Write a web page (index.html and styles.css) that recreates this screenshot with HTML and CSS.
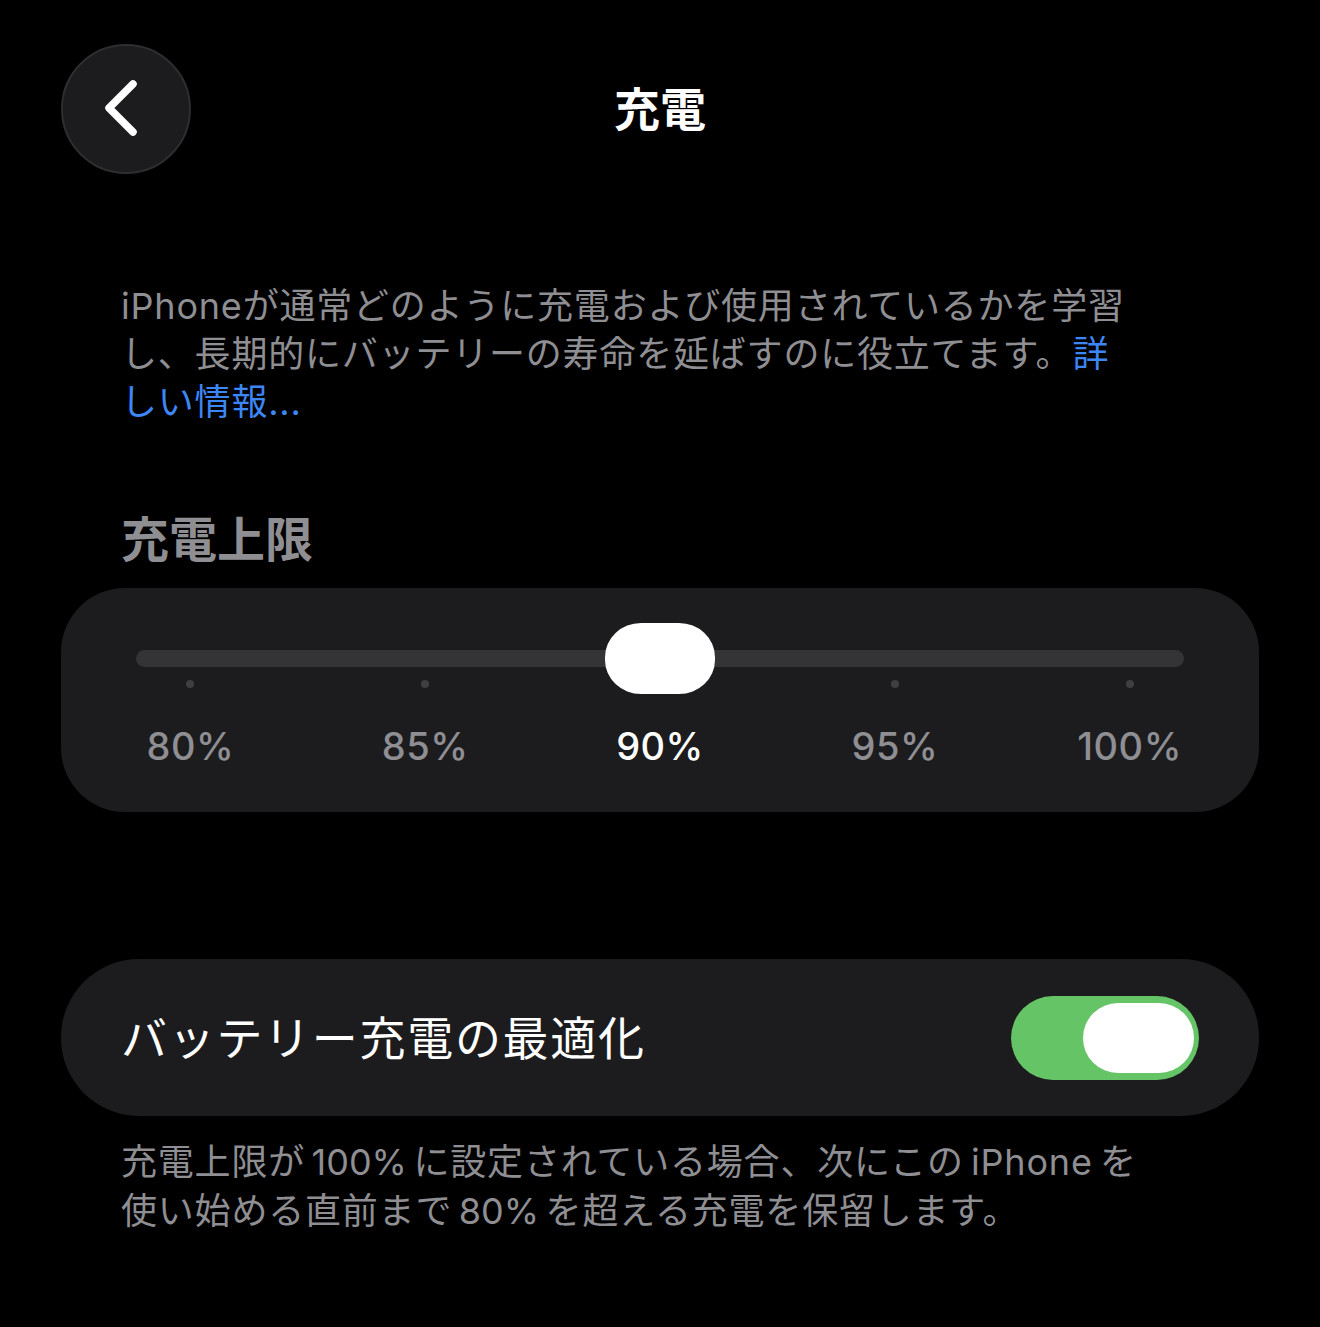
FILE: index.html
```html
<!DOCTYPE html>
<html lang="ja">
<head>
  <meta charset="UTF-8" />
  <meta name="viewport" content="width=device-width, initial-scale=1.0" />
  <title>充電</title>
  <link rel="stylesheet" href="styles.css">
</head>
<body>
  <div class="container">
    <header class="nav">
      <button class="back" aria-label="戻る">
        <svg width="40" height="60" viewBox="0 0 40 60">
          <polyline points="30,5 6,29 30,53" fill="none" stroke="#fff" stroke-width="7.5" stroke-linecap="round" stroke-linejoin="round" />
        </svg>
      </button>
      <h1>充電</h1>
      <span></span>
    </header>

    <p class="intro">iPhoneが通常どのように充電および使用されているかを学習し、長期的にバッテリーの寿命を延ばすのに役立てます。<a href="#">詳しい情報...</a></p>

    <h2 class="section-title">充電上限</h2>
    <section class="card limit">
      <div class="track">
        <div class="thumb"></div>
      </div>
      <!-- Stops along the slider -->
      <div class="stops">
        <div class="stop"><span class="dot"></span><span class="label">80%</span></div>
        <div class="stop"><span class="dot"></span><span class="label">85%</span></div>
        <div class="stop active"><span class="dot"></span><span class="label">90%</span></div>
        <div class="stop"><span class="dot"></span><span class="label">95%</span></div>
        <div class="stop"><span class="dot"></span><span class="label">100%</span></div>
      </div>
    </section>

    <section class="card row">
      <span class="row-title">バッテリー充電の最適化</span>
      <div class="switch on"><span class="knob"></span></div>
    </section>
    <!-- narrow no-break spaces keep latin runs apart from kana -->
    <p class="note">充電上限が&#8239;100%&#8239;に設定されている場合、次にこの&#8239;iPhone&#8239;を使い始める直前まで&#8239;80%&#8239;を超える充電を保留します。</p>
  </div>
</body>
</html>
```

FILE: styles.css
```css
* {
  margin: 0;
  padding: 0;
  box-sizing: border-box;
}
body {
  background-color: #000;
  color: #fff;
  font-family: Inter, "Noto Sans CJK JP", sans-serif;
}
.container {
  padding: 44px 61px 0;
}

/* Navigation bar */
.nav {
  display: grid;
  grid-template-columns: 130px 1fr 130px;
  align-items: center;
  height: 130px;
}
.back {
  width: 130px;
  height: 130px;
  border-radius: 50%;
  background-color: #1c1c1e;
  border: 2px solid #2e2e30;
  display: flex;
  align-items: center;
  justify-content: center;
  padding-right: 6px;
  cursor: pointer;
}
.nav h1 {
  text-align: center;
  font-size: 46px;
  font-weight: 700;
  line-height: 1;
}

/* Intro text */
.intro {
  margin: 108px 0 0 60px;
  width: 1010px;
  font-size: 36px;
  line-height: 48px;
  letter-spacing: 0.8px;
  color: #8e8e93;
}
.intro a {
  color: #3d86f5;
  text-decoration: none;
}

.section-title {
  margin: 86px 0 0 60px;
  font-size: 48px;
  font-weight: 700;
  line-height: 56px;
  color: #8e8e93;
}

/* Cards */
.card {
  background-color: #1c1c1e;
  border-radius: 64px;
}
.limit {
  margin-top: 20px;
  height: 224px;
  padding: 62px 12px 0;
}
.track {
  position: relative;
  height: 17px;
  margin: 0 63px;
  border-radius: 9px;
  background-color: #343437;
}
.thumb {
  position: absolute;
  left: 50%;
  top: 50%;
  width: 110px;
  height: 71px;
  margin: -35.5px 0 0 -55px;
  border-radius: 36px / 34px;
  background-color: #fff;
}
.stops {
  display: grid;
  grid-template-columns: repeat(5, 1fr);
  margin-top: 13px;
}
.stop {
  display: flex;
  flex-direction: column;
  align-items: center;
}
.dot {
  width: 8px;
  height: 8px;
  border-radius: 50%;
  background-color: #3f3f42;
}
.stop.active .dot {
  visibility: hidden;
}
.label {
  margin-top: 36px;
  font-size: 38px;
  font-weight: 500;
  line-height: 44px;
  letter-spacing: 0.5px;
  color: #8e8e93;
}
.stop.active .label {
  color: #fff;
}

/* Toggle row */
.row {
  margin-top: 147px;
  height: 157px;
  padding: 0 60px;
  border-radius: 78px;
  display: flex;
  align-items: center;
  justify-content: space-between;
}
.row-title {
  font-size: 46px;
  line-height: 1;
  letter-spacing: 1.7px;
}
.switch {
  position: relative;
  width: 188px;
  height: 84px;
  border-radius: 42px;
  background-color: #65c466;
}
.knob {
  position: absolute;
  right: 5px;
  top: 7px;
  width: 111px;
  height: 70px;
  border-radius: 35px;
  background-color: #fff;
}

.note {
  margin: 22px 0 0 60px;
  width: 1020px;
  font-size: 36px;
  line-height: 49px;
  letter-spacing: 0.8px;
  color: #8e8e93;
}
```
